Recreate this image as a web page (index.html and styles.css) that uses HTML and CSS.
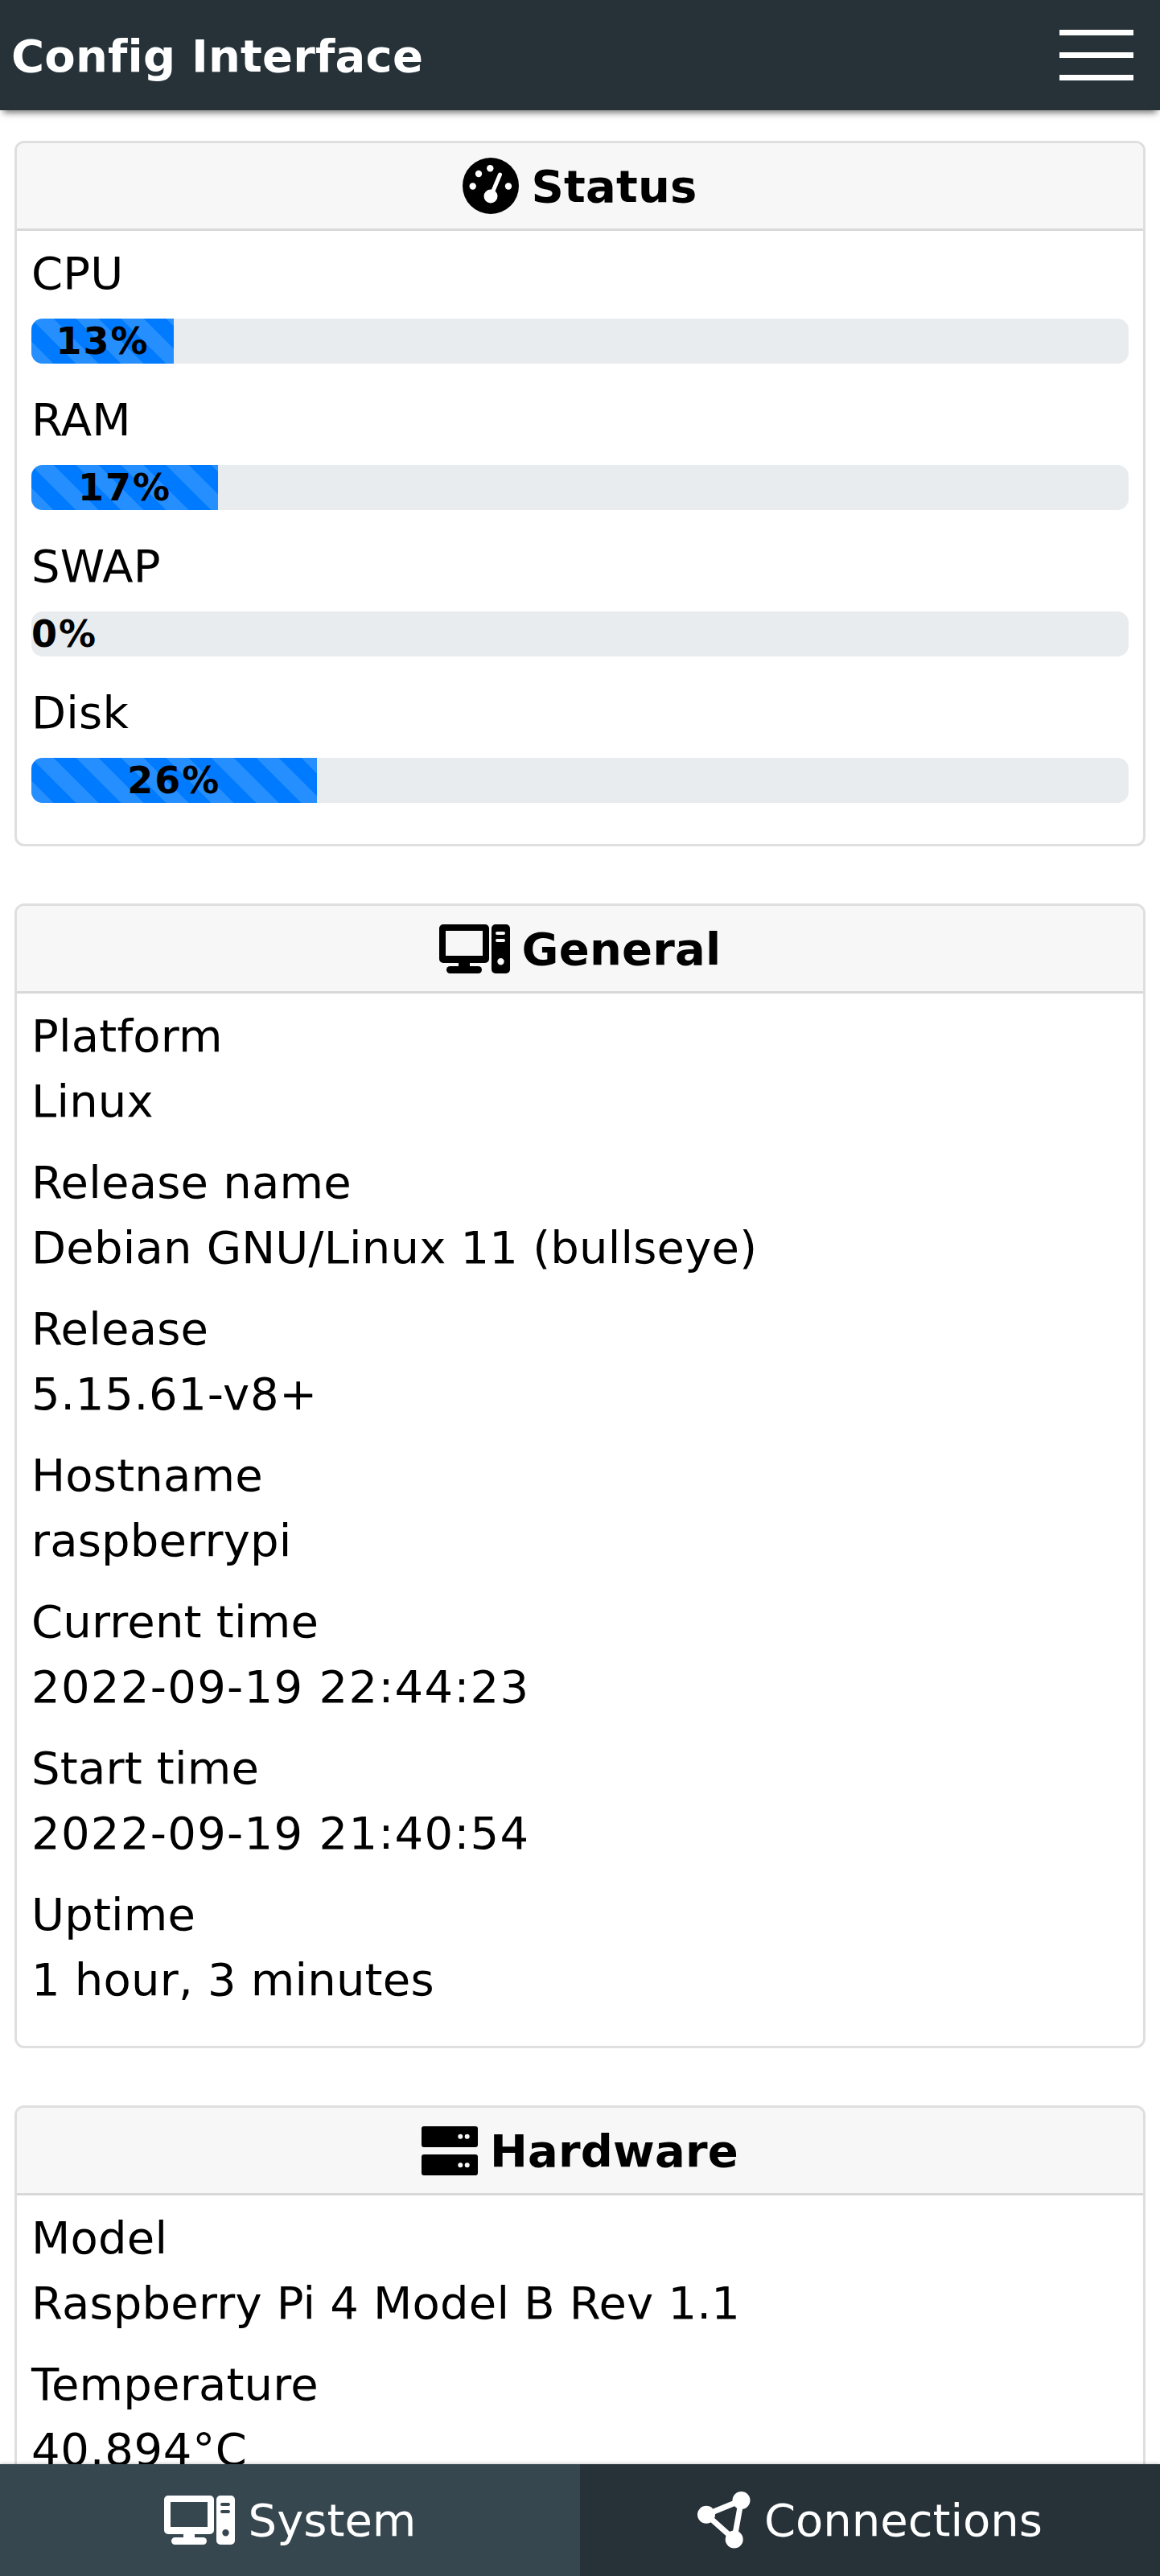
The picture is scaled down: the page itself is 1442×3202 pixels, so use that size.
FILE: index.html
```html
<!DOCTYPE html>
<html lang="en">
<head>
    <meta charset="UTF-8">
    <meta name="viewport" content="width=device-width, initial-scale=1.0">
    <title>Config Interface</title>
    <link rel="stylesheet" href="styles.css">
</head>
<body>
    <header class="topbar">
        <span class="brand">Config Interface</span>
        <button class="menu-button" aria-label="Menu">
            <span class="menu-line"></span>
            <span class="menu-line"></span>
            <span class="menu-line"></span>
        </button>
    </header>

    <main class="content">
        <section class="card card-status">
            <h2 class="card-header">
                <svg class="icon icon-gauge" viewBox="0 0 70 70">
                    <circle cx="35" cy="35" r="35" fill="currentColor"/>
                    <g fill="#fff">
                        <circle cx="12.7" cy="35.5" r="4.2"/>
                        <circle cx="20" cy="20" r="4.2"/>
                        <circle cx="34.3" cy="13.3" r="4.2"/>
                        <circle cx="57" cy="35.5" r="4.2"/>
                        <circle cx="35" cy="48" r="8.5"/>
                    </g>
                    <line x1="36" y1="46" x2="46.5" y2="21" stroke="#fff" stroke-width="5" stroke-linecap="round"/>
                </svg>
                Status
            </h2>
            <div class="card-body">
                <div class="stat">
                    <div class="stat-label">CPU</div>
                    <div class="progress"><div class="progress-bar" style="width: 13%">13%</div></div>
                </div>
                <div class="stat">
                    <div class="stat-label">RAM</div>
                    <div class="progress"><div class="progress-bar" style="width: 17%">17%</div></div>
                </div>
                <div class="stat">
                    <div class="stat-label">SWAP</div>
                    <div class="progress"><div class="progress-bar progress-empty">0%</div></div>
                </div>
                <div class="stat">
                    <div class="stat-label">Disk</div>
                    <div class="progress"><div class="progress-bar" style="width: 26%">26%</div></div>
                </div>
            </div>
        </section>

        <section class="card">
            <h2 class="card-header">
                <svg class="icon icon-desktop" viewBox="0 0 88 61">
                    <use href="#desktop-shape"/>
                </svg>
                General
            </h2>
            <div class="card-body">
                <div class="info"><div>Platform</div><div>Linux</div></div>
                <div class="info"><div>Release name</div><div>Debian GNU/Linux 11 (bullseye)</div></div>
                <div class="info"><div>Release</div><div class="mixed">5.15.61-v8+</div></div>
                <div class="info"><div>Hostname</div><div>raspberrypi</div></div>
                <div class="info"><div>Current time</div><div class="digits">2022-09-19 22:44:23</div></div>
                <div class="info"><div>Start time</div><div class="digits">2022-09-19 21:40:54</div></div>
                <div class="info"><div>Uptime</div><div>1 hour, 3 minutes</div></div>
            </div>
        </section>

        <section class="card">
            <h2 class="card-header">
                <svg class="icon icon-server" viewBox="0 0 70 61">
                    <path fill="currentColor" fill-rule="evenodd" d="M3 0H67a3 3 0 0 1 3 3V23a3 3 0 0 1-3 3H3a3 3 0 0 1-3-3V3a3 3 0 0 1 3-3ZM48.3 9.7a3 3 0 1 0 0 6a3 3 0 1 0 0-6ZM56.7 9.7a3 3 0 1 0 0 6a3 3 0 1 0 0-6Z"/>
                    <path fill="currentColor" fill-rule="evenodd" d="M3 35H67a3 3 0 0 1 3 3V58a3 3 0 0 1-3 3H3a3 3 0 0 1-3-3V38a3 3 0 0 1 3-3ZM48.3 45.3a3 3 0 1 0 0 6a3 3 0 1 0 0-6ZM56.7 45.3a3 3 0 1 0 0 6a3 3 0 1 0 0-6Z"/>
                </svg>
                Hardware
            </h2>
            <div class="card-body">
                <div class="info"><div>Model</div><div>Raspberry Pi 4 Model B Rev 1.1</div></div>
                <div class="info"><div>Temperature</div><div class="mixed">40.894°C</div></div>
            </div>
        </section>
    </main>

    <nav class="tabs">
        <a class="tab tab-active" href="#">
            <svg class="icon icon-desktop" viewBox="0 0 88 61">
                <g id="desktop-shape" fill="currentColor" fill-rule="evenodd">
                    <path d="M5 0H57a5 5 0 0 1 5 5V43a5 5 0 0 1-5 5H5a5 5 0 0 1-5-5V5a5 5 0 0 1 5-5ZM8 8V39H54V8Z"/>
                    <rect x="24" y="47" width="14" height="7"/>
                    <rect x="9" y="52" width="44" height="9" rx="4.5"/>
                    <path d="M70 0H83a5 5 0 0 1 5 5V56a5 5 0 0 1-5 5H70a5 5 0 0 1-5-5V5a5 5 0 0 1 5-5ZM72 9a2 2 0 0 0 0 4h8a2 2 0 0 0 0-4ZM72 18a2 2 0 0 0 0 4h8a2 2 0 0 0 0-4ZM76.5 42a4.2 4.2 0 1 0 0 8.4a4.2 4.2 0 1 0 0-8.4Z"/>
                </g>
            </svg>
            System
        </a>
        <a class="tab" href="#">
            <svg class="icon icon-share" viewBox="0 0 66 71">
                <g fill="currentColor">
                    <circle cx="11" cy="28.7" r="11"/>
                    <circle cx="54.5" cy="11" r="11"/>
                    <circle cx="45.7" cy="59.5" r="11"/>
                </g>
                <path d="M11 28.7L54.5 11L45.7 59.5Z" fill="none" stroke="currentColor" stroke-width="7"/>
            </svg>
            Connections
        </a>
    </nav>
</body>
</html>
```

FILE: styles.css
```css
* {
    box-sizing: border-box;
}

body {
    font-family: "DejaVu Sans", sans-serif;
    font-size: 56px;
    line-height: 81px;
    letter-spacing: 0.2px;
    display: flex;
    flex-direction: column;
    height: 100vh;
    margin: 0;
    overflow: hidden;
    background-color: #fff;
    color: #000;
}

.topbar {
    position: relative;
    z-index: 2;
    flex: none;
    display: flex;
    justify-content: space-between;
    align-items: center;
    height: 137px;
    padding: 0 33px 0 14px;
    background-color: #263238;
    box-shadow: 0 7px 8px -4px rgba(0, 0, 0, 0.55);
}

.brand {
    padding-top: 2px;
    font-weight: bold;
    letter-spacing: 0.2px;
    color: #fff;
}

.menu-button {
    display: flex;
    flex-direction: column;
    gap: 21px;
    padding: 0;
    border: 0;
    background: none;
}

.menu-line {
    display: block;
    width: 92px;
    height: 7px;
    background-color: #fff;
}

.content {
    flex: 1;
    min-height: 0;
    overflow: hidden;
    padding: 38px 18px 0;
}

.card {
    margin-bottom: 71px;
    border: 3px solid #dfdfdf;
    border-radius: 12px;
    overflow: hidden;
}

.card-header {
    display: flex;
    justify-content: center;
    align-items: center;
    gap: 15px;
    height: 109px;
    margin: 0;
    font-size: 56px;
    font-weight: bold;
    background-color: #f7f7f7;
    border-bottom: 3px solid #d8d8d8;
}

.card-body {
    padding: 12px 18px 22px;
}

.icon {
    flex: none;
    display: block;
}

.icon-gauge {
    width: 70px;
    height: 70px;
}

.icon-desktop {
    width: 88px;
    height: 61px;
}

.icon-server {
    width: 70px;
    height: 61px;
}

.icon-share {
    width: 66px;
    height: 71px;
}

.stat {
    height: 182px;
}

.stat-label {
    height: 97px;
}

.progress {
    height: 56px;
    background-color: #e9ecef;
    border-radius: 14px;
    overflow: hidden;
}

.progress-bar {
    height: 100%;
    font-size: 46px;
    font-weight: bold;
    line-height: 56px;
    letter-spacing: 2px;
    text-align: center;
    white-space: nowrap;
    background-color: #007bff;
    background-image: linear-gradient(45deg, rgba(255, 255, 255, 0.15) 25%, transparent 25%, transparent 50%, rgba(255, 255, 255, 0.15) 50%, rgba(255, 255, 255, 0.15) 75%, transparent 75%, transparent);
    background-size: 56px 56px;
}

.progress-empty {
    background: none;
    text-align: left;
}

.info {
    height: 182px;
}

.digits {
    letter-spacing: 1.3px;
}

.mixed {
    letter-spacing: 0.7px;
}

.tabs {
    position: relative;
    z-index: 2;
    flex: none;
    display: flex;
    height: 139px;
    letter-spacing: 0;
    box-shadow: 0 -1px 4px rgba(0, 0, 0, 0.2);
}

.tab {
    flex: 1;
    display: flex;
    justify-content: center;
    align-items: center;
    gap: 17px;
    color: #fff;
    text-decoration: none;
    background-color: #263238;
}

.tab-active {
    background-color: #37474f;
}
```
